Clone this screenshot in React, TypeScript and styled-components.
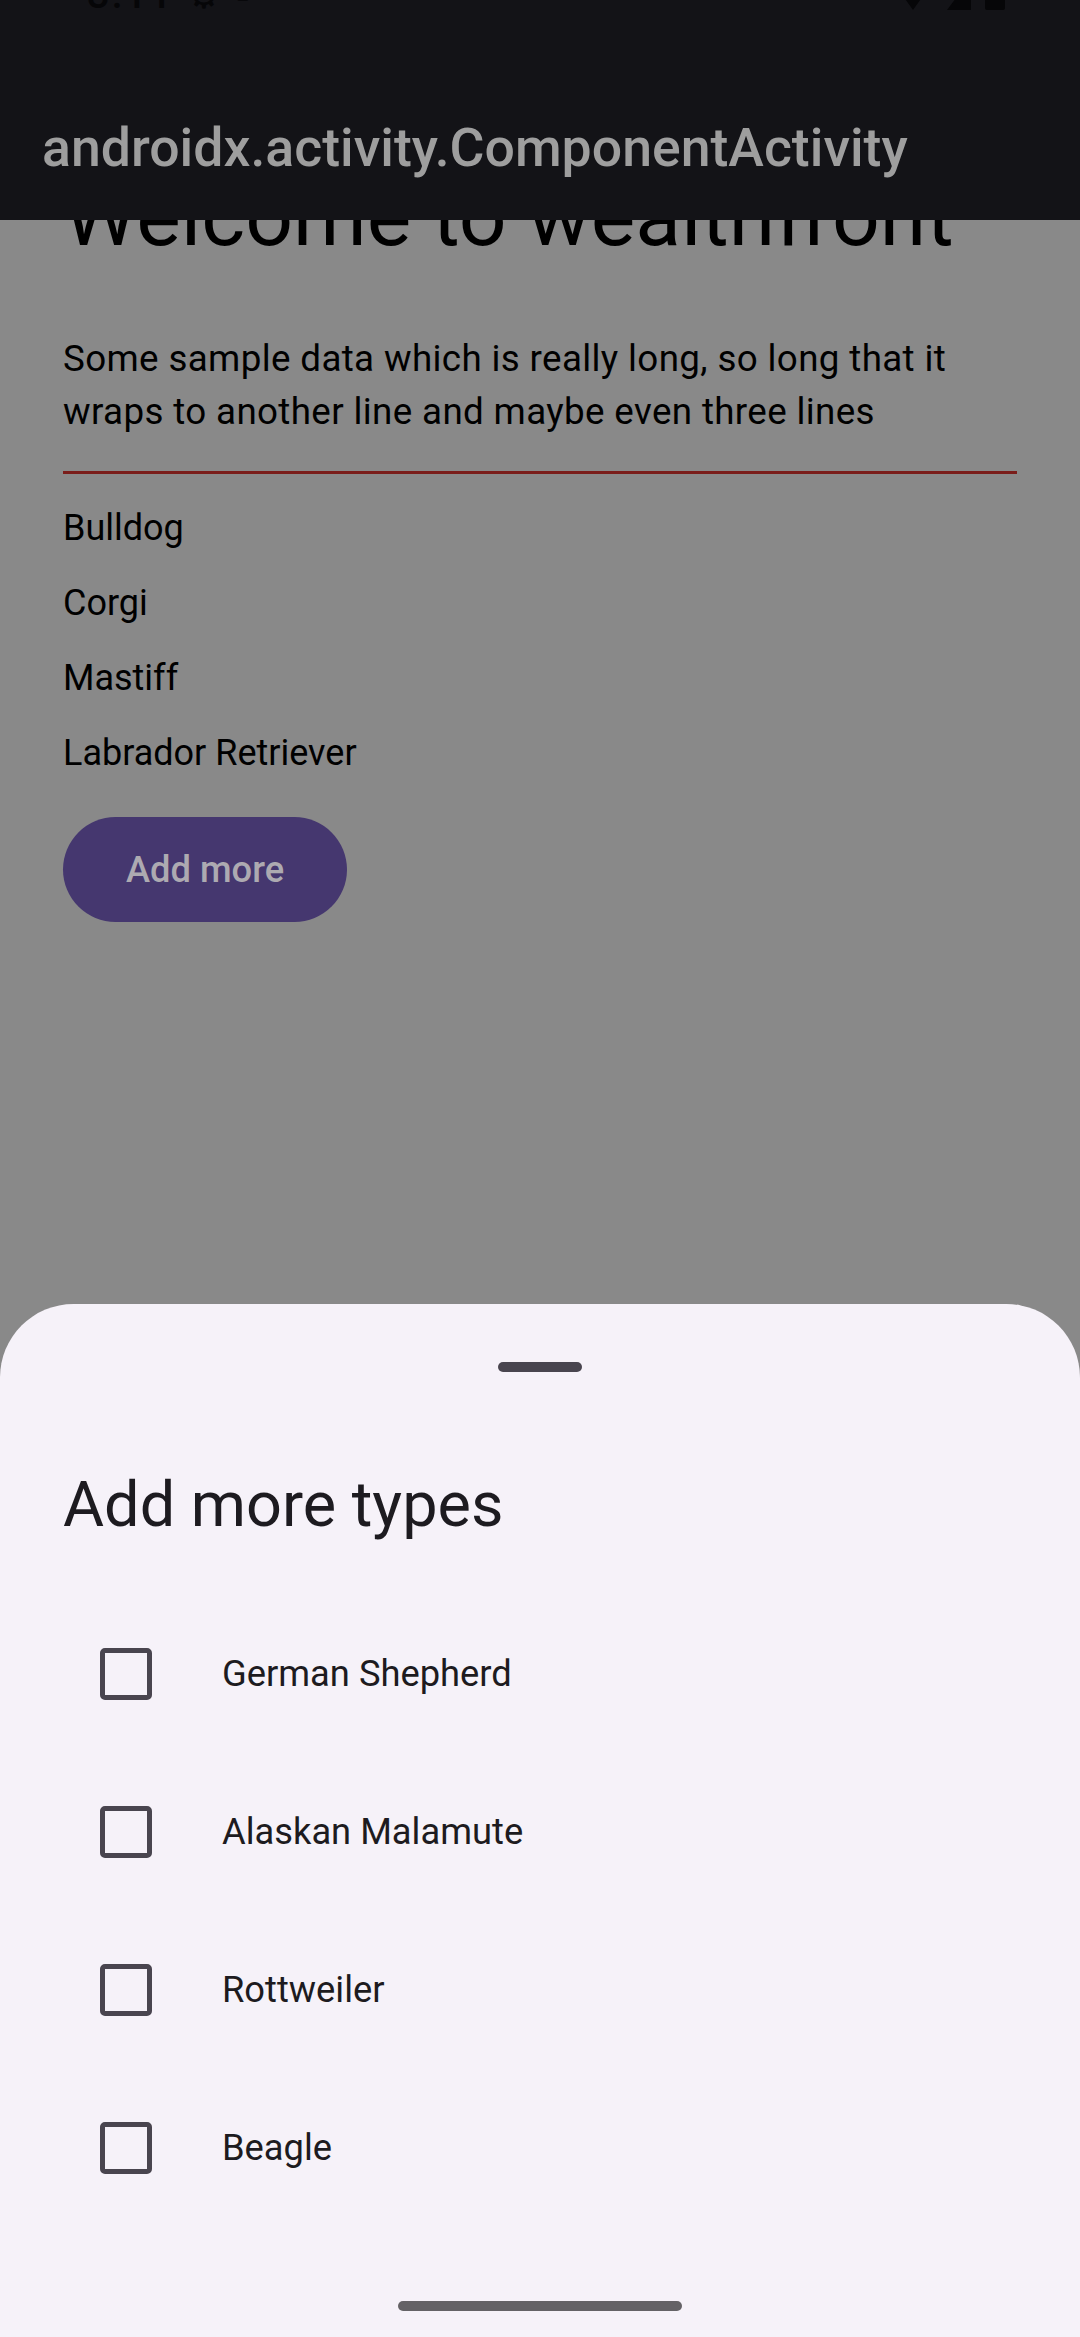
import React from "react";
import styled, { createGlobalStyle } from "styled-components";

const GlobalStyle = createGlobalStyle`
  html, body {
    margin: 0;
    padding: 0;
    background: #898989;
  }
  * { box-sizing: border-box; }
  #root { width: 1080px; }
`;

const Screen = styled.div`
  width: 1080px;
  height: 2337px;
  display: flex;
  flex-direction: column;
  background: #898989;
  font-family: Roboto, "Noto Sans", sans-serif;
  overflow: hidden;
`;

const TopBar = styled.header`
  flex: none;
  height: 220px;
  background: #131317;
  display: flex;
  flex-direction: column;
`;

const StatusBar = styled.div`
  height: 73px;
  flex: none;
`;

const StatusStrip = styled.div`
  height: 10px;
  overflow: hidden;
  display: flex;
  align-items: flex-end;
  padding: 0 75px 0 87px;
`;

const StatusTime = styled.span`
  font-size: 40px;
  line-height: 30px;
  color: #060608;
  font-weight: 500;
  letter-spacing: 2px;
`;

const StatusIcons = styled.div`
  margin-left: auto;
  display: flex;
  align-items: flex-end;
  gap: 14px;
`;

const ActionBar = styled.div`
  flex: 1;
  display: flex;
  align-items: center;
  padding-left: 42px;
`;

const ActionTitle = styled.h1`
  margin: 0;
  font-size: 53.6px;
  font-weight: 500;
  line-height: 1;
  color: #9e9e9e;
  padding-top: 2px;
`;

const Content = styled.main`
  flex: 1;
  overflow: hidden;
  display: flex;
  flex-direction: column;
  align-items: flex-start;
  padding: 0 63px;
`;

const Heading = styled.h2`
  margin: -56px 0 0;
  font-size: 84px;
  line-height: 105px;
  font-weight: 400;
  color: #000;
  white-space: nowrap;
`;

const Body = styled.p`
  margin: 64px 0 0;
  font-size: 36.75px;
  line-height: 52.5px;
  letter-spacing: 0.36px;
  color: #000;
`;

const Divider = styled.hr`
  align-self: stretch;
  margin: 33px 0 0;
  border: none;
  height: 3px;
  background: #7a1d1a;
`;

const DogList = styled.ul`
  list-style: none;
  margin: 17px 0 0;
  padding: 0;
`;

const DogItem = styled.li`
  padding: 11.25px 0;
  font-size: 36px;
  line-height: 52.5px;
  letter-spacing: 0;
  color: #000;
`;

const AddButton = styled.button`
  margin-top: 26px;
  height: 105px;
  padding: 0 63px;
  border: none;
  border-radius: 52.5px;
  background: #45376f;
  color: #adaab1;
  font-family: Roboto, "Noto Sans", sans-serif;
  font-size: 36.3px;
  font-weight: 500;
  letter-spacing: 0;
`;

const Sheet = styled.section`
  flex: none;
  background: #f6f2f9;
  border-radius: 73.5px 73.5px 0 0;
  display: flex;
  flex-direction: column;
`;

const HandleArea = styled.div`
  height: 126px;
  display: flex;
  align-items: center;
  justify-content: center;
`;

const DragHandle = styled.div`
  width: 84px;
  height: 10.5px;
  border-radius: 6px;
  background: #49454f;
`;

const SheetTitle = styled.h3`
  margin: 32.5px 0 0;
  padding-left: 63px;
  font-size: 63px;
  line-height: 84px;
  font-weight: 400;
  color: #1d1b20;
`;

const Options = styled.div`
  margin-top: 48.5px;
  display: flex;
  flex-direction: column;
`;

const OptionRow = styled.label`
  height: 158px;
  display: flex;
  align-items: center;
  padding-left: 63px;
`;

const CheckTarget = styled.span`
  width: 126px;
  height: 126px;
  display: flex;
  align-items: center;
  justify-content: center;
  flex: none;
`;

const CheckBox = styled.span`
  width: 52.5px;
  height: 52.5px;
  border: 5.25px solid #49454f;
  border-radius: 5px;
`;

const OptionLabel = styled.span`
  margin-left: 33px;
  font-size: 36.3px;
  line-height: 52.5px;
  letter-spacing: 0;
  color: #1d1b20;
`;

const NavArea = styled.div`
  height: 110px;
  display: flex;
  align-items: flex-end;
  justify-content: center;
  padding-bottom: 26px;
`;

const GestureBar = styled.div`
  width: 284px;
  height: 10.5px;
  border-radius: 6px;
  background: #646266;
`;

const dogs = ["Bulldog", "Corgi", "Mastiff", "Labrador Retriever"];
const moreTypes = ["German Shepherd", "Alaskan Malamute", "Rottweiler", "Beagle"];

export default function App() {
  return (
    <>
      <GlobalStyle />
      <Screen>
        <TopBar>
          <StatusBar>
            <StatusStrip>
              <StatusTime>3:11 ⚙ ▪</StatusTime>
              <StatusIcons>
                <svg width="40" height="32" viewBox="0 0 40 32">
                  <path d="M0 4 Q20 -8 40 4 L20 32 Z" fill="#060608" />
                </svg>
                <svg width="24" height="32" viewBox="0 0 24 32">
                  <path d="M24 0 L24 32 L0 32 Z" fill="#060608" />
                </svg>
                <svg width="20" height="36" viewBox="0 0 20 36">
                  <rect x="0" y="0" width="20" height="36" rx="2" fill="#060608" />
                </svg>
              </StatusIcons>
            </StatusStrip>
          </StatusBar>
          <ActionBar>
            <ActionTitle>androidx.activity.ComponentActivity</ActionTitle>
          </ActionBar>
        </TopBar>

        <Content>
          <Heading>Welcome to wealthfront</Heading>
          <Body>
            Some sample data which is really long, so long that it wraps to another line and maybe
            even three lines
          </Body>
          <Divider />
          <DogList>
            {dogs.map((d) => (
              <DogItem key={d}>{d}</DogItem>
            ))}
          </DogList>
          <AddButton>Add more</AddButton>
        </Content>

        <Sheet>
          <HandleArea>
            <DragHandle />
          </HandleArea>
          <SheetTitle>Add more types</SheetTitle>
          <Options>
            {moreTypes.map((t) => (
              <OptionRow key={t}>
                <CheckTarget>
                  <CheckBox />
                </CheckTarget>
                <OptionLabel>{t}</OptionLabel>
              </OptionRow>
            ))}
          </Options>
          <NavArea>
            <GestureBar />
          </NavArea>
        </Sheet>
      </Screen>
    </>
  );
}
